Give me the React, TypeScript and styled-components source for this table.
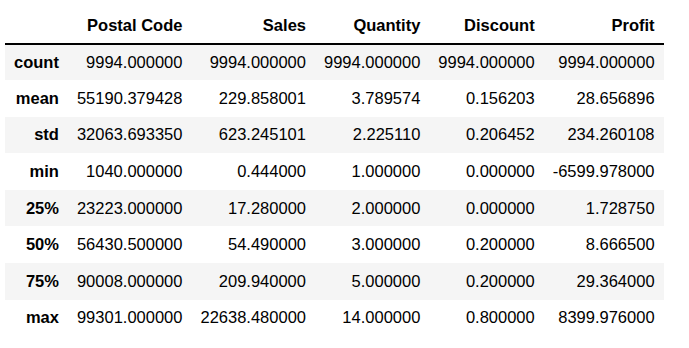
import React from "react";
import styled, { createGlobalStyle } from "styled-components";

const Global = createGlobalStyle`
  html, body { margin: 0; padding: 0; background: #ffffff; }
  body { font-family: "Liberation Sans", Arial, sans-serif; }
`;

const Wrap = styled.div`
  padding: 8px 0 0 5px;
`;

const Table = styled.table`
  border-collapse: collapse;
  border-spacing: 0;
  font-family: "Liberation Sans", Arial, sans-serif;
  font-size: 16.5px;
  color: #000;
`;

const HeadRow = styled.tr`
  height: 35.5px;
  border-bottom: 2px solid #000;
`;

const Row = styled.tr<{ $striped: boolean }>`
  height: 36.6px;
  background: ${(p) => (p.$striped ? "#f5f5f5" : "#ffffff")};
`;

const Th = styled.th`
  text-align: right;
  font-weight: bold;
  padding: 0 9px;
  white-space: nowrap;
  vertical-align: middle;
`;

const Td = styled.td`
  text-align: right;
  padding: 0 9px;
  white-space: nowrap;
  vertical-align: middle;
`;

const columns = ["Postal Code", "Sales", "Quantity", "Discount", "Profit"];

const rows: [string, string[]][] = [
  ["count", ["9994.000000", "9994.000000", "9994.000000", "9994.000000", "9994.000000"]],
  ["mean", ["55190.379428", "229.858001", "3.789574", "0.156203", "28.656896"]],
  ["std", ["32063.693350", "623.245101", "2.225110", "0.206452", "234.260108"]],
  ["min", ["1040.000000", "0.444000", "1.000000", "0.000000", "-6599.978000"]],
  ["25%", ["23223.000000", "17.280000", "2.000000", "0.000000", "1.728750"]],
  ["50%", ["56430.500000", "54.490000", "3.000000", "0.200000", "8.666500"]],
  ["75%", ["90008.000000", "209.940000", "5.000000", "0.200000", "29.364000"]],
  ["max", ["99301.000000", "22638.480000", "14.000000", "0.800000", "8399.976000"]],
];

export default function App() {
  return (
    <>
      <Global />
      <Wrap>
        <Table>
          <thead>
            <HeadRow>
              <Th />
              {columns.map((c) => (
                <Th key={c}>{c}</Th>
              ))}
            </HeadRow>
          </thead>
          <tbody>
            {rows.map(([label, vals], i) => (
              <Row key={label} $striped={i % 2 === 0}>
                <Th>{label}</Th>
                {vals.map((v, j) => (
                  <Td key={j}>{v}</Td>
                ))}
              </Row>
            ))}
          </tbody>
        </Table>
      </Wrap>
    </>
  );
}
